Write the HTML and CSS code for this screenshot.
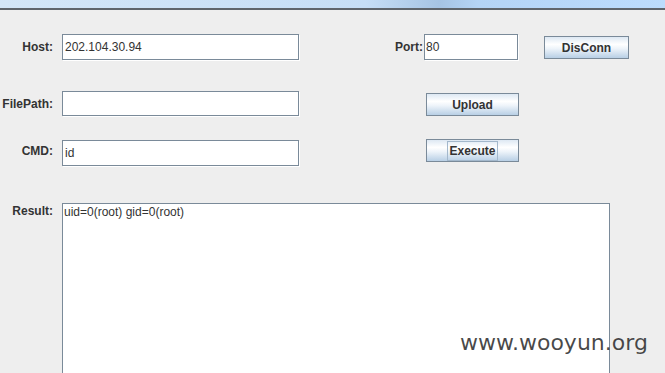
FILE: index.html
```html
<!DOCTYPE html>
<html lang="en">
<head>
    <meta charset="UTF-8">
    <meta name="viewport" content="width=device-width, initial-scale=1.0">
    <title>Upload Tool</title>
    <link rel="stylesheet" href="styles.css">
</head>
<body>
    <div class="titlebar"></div>

    <div class="form">
        <div class="row row-host">
            <label class="label">Host:</label>
            <input type="text" class="field" value="202.104.30.94">
            <label class="port-label">Port:</label>
            <input type="text" class="field port" value="80">
            <button class="btn btn-disconn">DisConn</button>
        </div>

        <div class="row row-file">
            <label class="label">FilePath:</label>
            <input type="text" class="field field-short" value="">
            <button class="btn btn-side">Upload</button>
        </div>

        <div class="row row-cmd">
            <label class="label">CMD:</label>
            <input type="text" class="field" value="id">
            <button class="btn btn-side btn-exec"><span class="focus">Execute</span></button>
        </div>

        <div class="row row-result">
            <label class="label label-top">Result:</label>
            <div class="result">uid=0(root) gid=0(root)</div>
        </div>
    </div>

    <div class="watermark">www.wooyun.org</div>
</body>
</html>
```

FILE: styles.css
```css
body {
    margin: 0;
    padding: 0;
    background-color: #eeeeee;
    font-family: "Liberation Sans", Arial, sans-serif;
    font-size: 12px;
    color: #333333;
    height: 373px;
    overflow: hidden;
}

.titlebar {
    height: 8px;
    border-bottom: 2px solid #5f656c;
    background: linear-gradient(to right, #d3e6f8 0%, #c6def6 55%, #a6c4e4 66%, #b4d4f6 72%, #bcdcfd 100%);
}

.form {
    display: flex;
    flex-direction: column;
    padding-top: 24px;
}

.row {
    display: flex;
    align-items: center;
}

.label {
    width: 53px;
    margin-right: 9px;
    text-align: right;
    font-weight: bold;
}

.field {
    width: 237px;
    height: 26px;
    box-sizing: border-box;
    margin: 0;
    padding: 0 2px;
    border: 1px solid #7a8a99;
    box-shadow: 1px 1px 0 #ffffff;
    background-color: #ffffff;
    font-family: "Liberation Sans", Arial, sans-serif;
    font-size: 12px;
    color: #333333;
    outline: none;
}

.field-short {
    height: 25px;
}

.port-label {
    width: 124px;
    text-align: right;
    font-weight: bold;
}

.port {
    width: 94px;
    margin-left: 1px;
    padding-left: 1px;
}

.btn {
    height: 23px;
    box-sizing: border-box;
    padding: 0;
    border: 1px solid #7a8a99;
    background: linear-gradient(to bottom, #dde8f3 0%, #ffffff 35%, #eef4fa 55%, #b8cfe5 100%);
    font-family: "Liberation Sans", Arial, sans-serif;
    font-size: 12px;
    font-weight: bold;
    color: #333333;
}

.btn-disconn {
    width: 85px;
    margin-left: 26px;
    align-self: flex-start;
    margin-top: 2px;
}

.btn-side {
    width: 93px;
    margin-left: 127px;
}

.row-file {
    margin-top: 31px;
}

.row-file .btn-side {
    align-self: flex-end;
}

.row-cmd {
    margin-top: 24px;
}

.row-cmd .label {
    align-self: flex-start;
    margin-top: 4px;
}

.btn-exec {
    align-self: flex-start;
    margin-top: -1px;
}

.focus {
    display: inline-block;
    padding: 3px 1px 3px 1px;
    border: 1px solid #a3b8cc;
    line-height: 12px;
}

.row-result {
    margin-top: 37px;
    align-items: flex-start;
}

.label-top {
    margin-top: 1px;
}

.result {
    width: 548px;
    height: 170px;
    box-sizing: border-box;
    padding: 1px 1px;
    border: 1px solid #7a8a99;
    border-bottom: none;
    background-color: #ffffff;
    line-height: 14px;
}

.watermark {
    position: absolute;
    left: 460px;
    top: 332px;
    font-family: "DejaVu Sans", sans-serif;
    font-size: 22px;
    line-height: 22px;
    color: rgba(30, 30, 30, 0.82);
}
```
